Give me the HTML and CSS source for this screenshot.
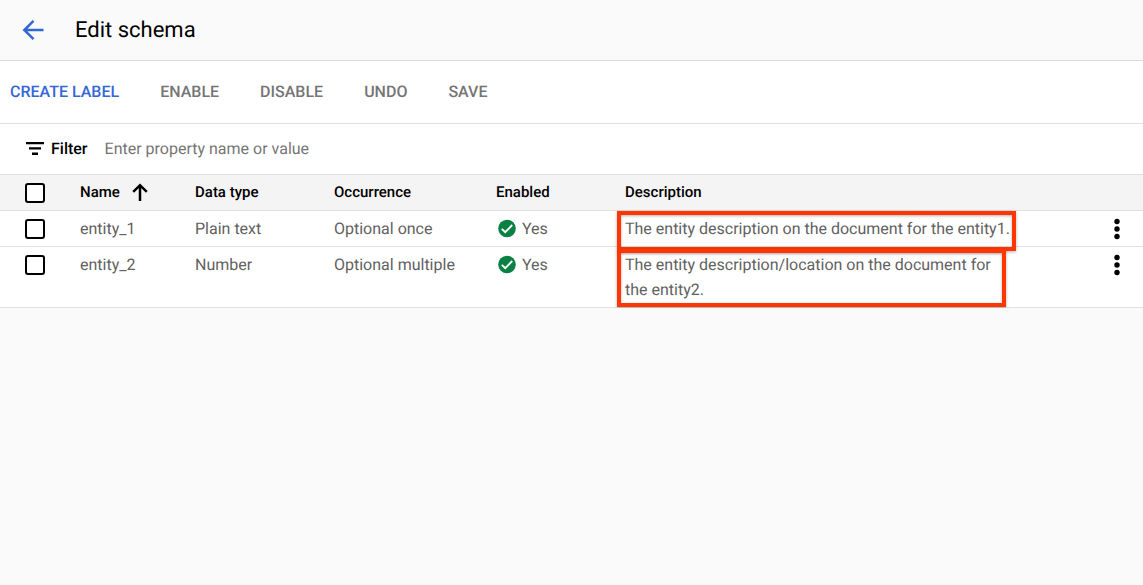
FILE: index.html
```html
<!DOCTYPE html>
<html lang="en">
<head>
<meta charset="utf-8">
<title>Edit schema</title>
<link rel="stylesheet" href="styles.css">
</head>
<body>
<header class="header">
  <button class="icon-button back" aria-label="Back">
    <svg width="22" height="22" viewBox="0 0 22 22" fill="none" stroke="#3367d6" stroke-width="2.500"><path d="M21.500 11H3M11.500 1.800 2.300 11l9.200 9.200"/></svg>
  </button>
  <h1 class="title">Edit schema</h1>
</header>
<nav class="toolbar" aria-label="Schema actions">
  <button class="action primary">CREATE LABEL</button>
  <button class="action">ENABLE</button>
  <button class="action">DISABLE</button>
  <button class="action">UNDO</button>
  <button class="action">SAVE</button>
</nav>
<main class="content">
  <div class="filter">
    <svg width="18" height="13" viewBox="0 0 18 13" fill="#000"><path d="M0 0h18v2.300H0zM3 5.300h12v2.300H3zM6 10.600h6v2.300H6z"/></svg>
    <label class="filter-label" for="filter">Filter</label>
    <input class="filter-input" id="filter" type="text" placeholder="Enter property name or value">
  </div>
  <table class="table">
    <colgroup><col class="col-check"><col class="col-name"><col class="col-type"><col class="col-occurrence"><col class="col-enabled"><col><col class="col-menu"></colgroup>
    <thead>
      <tr>
        <th class="check-cell"><input class="check" type="checkbox" aria-label="Select all"></th>
        <th><span class="sort">Name <svg width="16" height="18" viewBox="0 0 16 18" fill="none" stroke="#000" stroke-width="2.500"><path d="M8 17V1.500M1.200 7.800 8 1.200l6.800 6.600"/></svg></span></th>
        <th>Data type</th>
        <th>Occurrence</th>
        <th>Enabled</th>
        <th>Description</th>
        <th></th>
      </tr>
    </thead>
    <tbody>
      <tr>
        <td class="check-cell"><input class="check" type="checkbox" aria-label="Select entity_1"></td>
        <td>entity_1</td>
        <td>Plain text</td>
        <td>Optional once</td>
        <td><span class="status"><svg width="18" height="18" viewBox="0 0 18 18"><circle cx="9" cy="8.500" r="8.800" fill="#0b8043"/><path d="m3.800 8.800 3.400 3.400 7-7.200" fill="none" stroke="#fff" stroke-width="1.900"/></svg>Yes</span></td>
        <td class="description"><div class="description-text">The entity description on the document for the entity1.</div><span class="highlight highlight-first"></span></td>
        <td><button class="icon-button menu" aria-label="Actions for entity_1"><svg width="6" height="22" viewBox="0 0 6 22"><circle cx="3" cy="3.500" r="2.700"/><circle cx="3" cy="11" r="2.700"/><circle cx="3" cy="18.500" r="2.700"/></svg></button></td>
      </tr>
      <tr>
        <td class="check-cell"><input class="check" type="checkbox" aria-label="Select entity_2"></td>
        <td>entity_2</td>
        <td>Number</td>
        <td>Optional multiple</td>
        <td><span class="status"><svg width="18" height="18" viewBox="0 0 18 18"><circle cx="9" cy="8.500" r="8.800" fill="#0b8043"/><path d="m3.800 8.800 3.400 3.400 7-7.200" fill="none" stroke="#fff" stroke-width="1.900"/></svg>Yes</span></td>
        <td class="description"><div class="description-text">The entity description/location on the document for the entity2.</div><span class="highlight highlight-second"></span></td>
        <td><button class="icon-button menu" aria-label="Actions for entity_2"><svg width="6" height="22" viewBox="0 0 6 22"><circle cx="3" cy="3.500" r="2.700"/><circle cx="3" cy="11" r="2.700"/><circle cx="3" cy="18.500" r="2.700"/></svg></button></td>
      </tr>
    </tbody>
  </table>
</main>
</body>
</html>
```
FILE: styles.css
```css
* { box-sizing: border-box; }
body {
  margin: 0;
  background: #fafafa;
  color: #000;
  font: 16px/25px Roboto, "Liberation Sans", sans-serif;
  text-rendering: geometricPrecision;
}
button { border: 0; padding: 0; background: none; font: inherit; color: inherit; cursor: pointer; text-rendering: inherit; }
svg { display: block; flex: none; overflow: visible; }
.header {
  display: flex;
  align-items: center;
  gap: 31px;
  padding: 14px 22px 13px;
  border-bottom: 1px solid #dadada;
}
.icon-button { display: flex; }
.title { margin: 0; font-size: 22px; line-height: 33px; font-weight: 400; }
.back { padding-bottom: 2px; }
.toolbar {
  display: flex;
  gap: 41px;
  padding: 18px 10px 19px;
  background: #fff;
  border-bottom: 1px solid #e0e0e0;
}
.action { color: #757575; font-weight: 500; }
.action.primary { color: #3367d6; }
.content { background: #fff; }
.filter { display: flex; align-items: center; padding: 12px 26px 13px; }
.filter-label { margin: 0 17px 0 7px; font-weight: 500; }
.filter-input {
  flex: 1;
  height: 25px;
  border: 0;
  padding: 0;
  outline: 0;
  background: none;
  font: inherit;
  text-rendering: inherit;
}
.filter-input::placeholder { color: #757575; opacity: 1; }
.table { width: 100%; table-layout: fixed; border-collapse: separate; border-spacing: 0; color: #616161; border-top: 1px solid #e0e0e0; }
.col-check { width: 80px; }
.col-name { width: 115px; }
.col-type { width: 139px; }
.col-occurrence { width: 162px; }
.col-enabled { width: 129px; }
.col-menu { width: 29px; }
th, td { padding: 5px 0; border-bottom: 1px solid #e0e0e0; text-align: left; vertical-align: top; }
th { background: #f4f4f4; color: #000; font-size: 15px; font-weight: 500; }
.check-cell { padding: 8px 0 7px 25px; }
.check {
  display: block;
  appearance: none;
  width: 20px;
  height: 20px;
  margin: 0;
  border: 2px solid #000;
  border-radius: 3px;
  background: #fff;
}
.sort { display: flex; align-items: center; gap: 12px; }
.status { display: flex; align-items: center; gap: 6px; padding-left: 2px; }
.description { position: relative; }
.description-text { max-width: 392px; }
.highlight {
  position: absolute;
  left: -8px;
  border: 4px solid #ff3600;
  box-shadow: 0 1px 3px rgba(0, 0, 0, .3), inset 0 1px 3px rgba(0, 0, 0, .3);
  pointer-events: none;
}
.highlight-first { top: 0; width: 399px; height: 40px; }
.highlight-second { top: 2px; bottom: 0; width: 389px; }
.menu { padding: 2px 0 0; }
```
